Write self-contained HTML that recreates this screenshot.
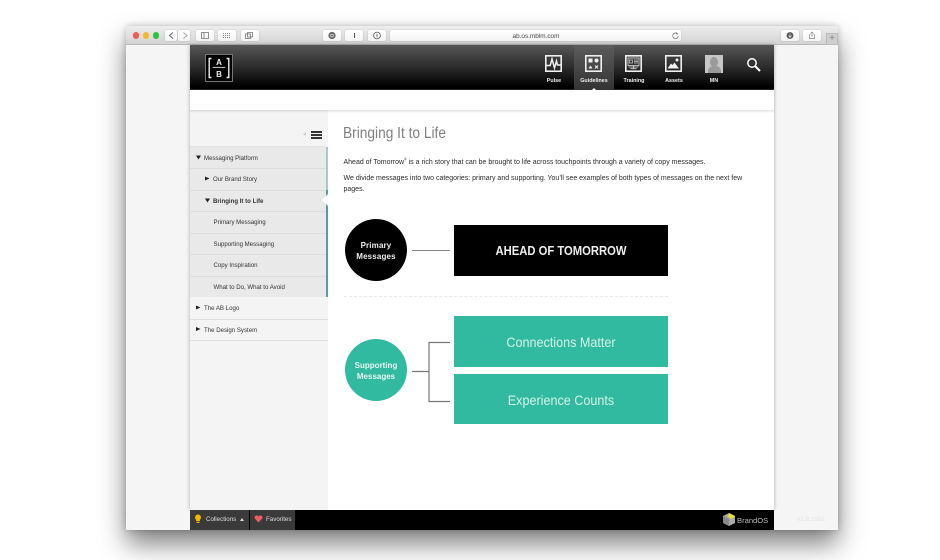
<!DOCTYPE html>
<html><head><meta charset="utf-8">
<style>
html,body{margin:0;padding:0;width:940px;height:560px;overflow:hidden;background:#fff;font-family:"Liberation Sans",sans-serif}
#all{position:absolute;left:0;top:0;width:940px;height:560px;filter:blur(.3px)}
.a{position:absolute}
.t{position:absolute;white-space:nowrap}
#win{left:126px;top:26px;width:712px;height:504px;background:#f5f5f5;box-shadow:0 14px 26px rgba(0,0,0,.5),0 0 7px rgba(0,0,0,.22);border-radius:3px 3px 1px 1px}
#bar{left:126px;top:26px;width:712px;height:19px;background:linear-gradient(#ededed,#d4d3d4);border-radius:3px 3px 0 0;border-bottom:1px solid #b9b9b9;box-sizing:border-box}
.dot{position:absolute;top:32px;width:6.5px;height:6.5px;border-radius:50%}
.btn{position:absolute;top:30px;height:11px;background:linear-gradient(#fff,#f3f3f3);border-radius:2px;box-shadow:0 0 1px rgba(0,0,0,.3)}
#hdr{left:190px;top:45px;width:584px;height:45px;background:linear-gradient(#565656 0,#2c2c2c 50%,#000 95%);border-bottom:1px solid #222;box-sizing:border-box}
.lab{position:absolute;top:77.5px;width:40px;text-align:center;font-size:5.4px;line-height:7px;color:#eee;font-weight:bold}
.ic{position:absolute;top:55px;width:17px;height:17px}
.nav{position:absolute;left:190px;width:136px;height:21px;border-bottom:1px solid #ddd;font-size:6.1px;line-height:21px;color:#333}
.nav span{position:absolute;top:.8px;white-space:nowrap}
.p{position:absolute;left:343.5px;font-size:7px;line-height:10px;color:#2c2c2c;white-space:nowrap}
.box{position:absolute;left:454px;width:214px}
</style></head><body><div id="all">
<div class="a" id="win"></div>
<div class="a" id="bar"></div>
<div class="dot" style="left:132.5px;background:#f4574f"></div>
<div class="dot" style="left:142.5px;background:#f8b62c"></div>
<div class="dot" style="left:152.5px;background:#2cc23e"></div>
<div class="btn" style="left:165px;width:12px"></div>
<div class="btn" style="left:178px;width:12px"></div>
<svg class="a" style="left:165px;top:30px" width="26" height="11" fill="none" stroke-width="1"><path d="M8 2.500L4.500 5.500 8 8.500" stroke="#666"/><path d="M18.500 2.500L22 5.500 18.500 8.500" stroke="#aaa"/></svg>
<div class="btn" style="left:196px;width:18px"></div>
<div class="btn" style="left:218px;width:18px"></div>
<div class="btn" style="left:241px;width:18px"></div>
<div class="btn" style="left:323px;width:18px"></div>
<div class="btn" style="left:345px;width:18px"></div>
<div class="btn" style="left:368px;width:18px"></div>
<div class="btn" style="left:390px;width:291px"></div>
<div class="btn" style="left:781px;width:18px"></div>
<div class="btn" style="left:803px;width:18px"></div>
<svg class="a" style="left:196px;top:30px" width="190" height="11" fill="none" stroke="#777" stroke-width=".8">
<rect x="5.500" y="2.500" width="7" height="6"/><path d="M8 2.500v6"/>
<path d="M27 3.500h7M27 5.500h7M27 7.500h7" stroke-dasharray="1 1" stroke="#666"/>
<rect x="49.500" y="4" width="5" height="4.500"/><rect x="51.500" y="2.500" width="5" height="4.500"/>
<circle cx="136" cy="5.500" r="3.600" fill="#666" stroke="none"/><circle cx="136" cy="5.500" r="1.400" stroke="#ddd"/>
<path d="M158.500 3v5" stroke="#555" stroke-width="1"/>
<circle cx="181" cy="5.500" r="3.400" stroke="#555"/><path d="M181 3.800v3.400" stroke="#555"/>
</svg>
<div class="t" style="left:500px;width:72px;text-align:center;top:31.500px;font-size:6.400px;line-height:9px;color:#444">ab.os.mblm.com</div>
<svg class="a" style="left:671px;top:31px" width="9" height="9" fill="none" stroke="#777" stroke-width=".8"><path d="M6.800 3.200A2.800 2.800 0 1 0 7.300 5"/><path d="M5 .9v2.400h2.200" fill="#777" stroke="none"/></svg>
<svg class="a" style="left:781px;top:30px" width="40" height="11"><circle cx="9" cy="5.500" r="3.400" fill="#555"/><path d="M9 3.500v3M7.500 5.500L9 7.500 10.500 5.500" stroke="#ddd" stroke-width=".8" fill="none"/><path d="M31 2v4.500M29.500 3.500L31 2l1.500 1.500M29.400 4.800h-1v3.700h5.200v-3.700h-1" stroke="#888" stroke-width=".7" fill="none"/></svg>
<div class="a" style="left:826px;top:33px;width:12px;height:12px;background:#cfcfcf;border:1px solid #bbb;box-sizing:border-box;color:#888;font-size:10px;line-height:10px;text-align:center">+</div>

<!-- app backing shadow -->
<div class="a" style="left:190px;top:45px;width:584px;height:465px;box-shadow:0 0 4px rgba(0,0,0,.3)"></div>

<!-- header -->
<div class="a" id="hdr"></div>
<div class="a" style="left:574px;top:45px;width:40px;height:45px;background:linear-gradient(#5c5c5c,#333)"></div>
<div class="a" style="left:205px;top:54px;width:28px;height:27.500px;background:#000;border:1px solid #777;box-sizing:border-box"></div>
<svg class="a" style="left:205px;top:54px" width="28" height="28" fill="none" stroke="#eee" stroke-width="1.400"><path d="M6.500 4.500H4.200V23.500H6.500M21.500 4.500H23.800V23.500H21.500"/><path d="M7.700 13.400H20.300" stroke="#ccc" stroke-width="1"/></svg>
<div class="t" style="left:205px;width:28px;text-align:center;top:57.500px;font-size:8px;line-height:9px;font-weight:bold;color:#eee">A</div>
<div class="t" style="left:205px;width:28px;text-align:center;top:70px;font-size:8px;line-height:9px;font-weight:bold;color:#eee">B</div>

<svg class="ic" style="left:545px" viewBox="0 0 17 17" fill="none"><rect x=".8" y=".8" width="15.400" height="15.400" stroke="#f0f0f0" stroke-width="1.600"/><path d="M1 10.500h4.200L7 4l2.500 9 2-7 1 4h3.500" stroke="#f0f0f0" stroke-width="1.500"/></svg>
<svg class="ic" style="left:585px" viewBox="0 0 17 17" fill="none"><rect x=".8" y=".8" width="15.400" height="15.400" stroke="#f0f0f0" stroke-width="1.600"/><rect x="3.500" y="3.500" width="4" height="4" fill="#f0f0f0"/><circle cx="11.500" cy="5.500" r="2" fill="#f0f0f0"/><path d="M3.500 13.500l2-3 2 3z" fill="#f0f0f0"/><path d="M10 10.500l3 3M13 10.500l-3 3" stroke="#f0f0f0"/></svg>
<svg class="ic" style="left:625px" viewBox="0 0 17 17" fill="none"><rect x=".8" y=".8" width="15.400" height="15.400" stroke="#f0f0f0" stroke-width="1.600"/><rect x="3" y="3" width="11" height="7.500" stroke="#ddd" stroke-width=".8"/><path d="M4.500 5h3v3h-3zM9 5h4M9 6.500h4M9 8h4" stroke="#ccc" stroke-width=".7"/><path d="M3.500 12h10M8.500 10.500v3M5.500 13.700h6" stroke="#ddd" stroke-width=".8"/></svg>
<svg class="ic" style="left:665px" viewBox="0 0 17 17" fill="none"><rect x=".8" y=".8" width="15.400" height="15.400" stroke="#f0f0f0" stroke-width="1.600"/><circle cx="12" cy="5" r="1.500" fill="#f0f0f0"/><path d="M2.500 13.500l3.500-5 1.500 1.500 2-2.500 4.500 6z" fill="#f0f0f0"/></svg>
<div class="ic" style="left:705px;width:18px;height:18px;background:#c6c6c6;overflow:hidden"><div class="a" style="left:5px;top:1.500px;width:8px;height:10px;border-radius:50%;background:#9a9a9a"></div><div class="a" style="left:2.500px;top:10.500px;width:13px;height:10px;border-radius:5px 5px 0 0;background:#9a9a9a"></div></div>
<svg class="a" style="left:746px;top:56.500px" width="15" height="15" fill="none" stroke="#fff"><circle cx="6" cy="6" r="4.200" stroke-width="1.500"/><path d="M9 9l5 5" stroke-width="2"/></svg>

<div class="lab" style="left:534px">Pulse</div>
<div class="lab" style="left:574px">Guidelines</div>
<div class="lab" style="left:614px">Training</div>
<div class="lab" style="left:654px">Assets</div>
<div class="lab" style="left:694px">MN</div>

<!-- white band -->
<div class="a" style="left:190px;top:90px;width:584px;height:20px;background:#fff"></div>
<div class="a" style="left:591px;top:88px;width:0;height:0;border-left:3px solid transparent;border-right:3px solid transparent;border-bottom:3px solid #fff"></div>

<!-- sidebar + content -->
<div class="a" style="left:190px;top:110px;width:138px;height:400px;background:#f4f4f4"></div>
<div class="a" style="left:328px;top:110px;width:446px;height:400px;background:#fff"></div>
<div class="a" style="left:190px;top:109.5px;width:584px;height:3px;background:linear-gradient(rgba(0,0,0,.12),rgba(0,0,0,0))"></div>

<div class="a" style="left:302.5px;top:132px;width:0;height:0;border-top:2.500px solid transparent;border-bottom:2.500px solid transparent;border-right:3.500px solid #ccc"></div>
<div class="a" style="left:311px;top:131px;width:10.5px;height:1.700px;background:#333"></div>
<div class="a" style="left:311px;top:134.2px;width:10.5px;height:1.700px;background:#333"></div>
<div class="a" style="left:311px;top:137.4px;width:10.5px;height:1.700px;background:#333"></div>

<div class="a" style="left:190px;top:146px;width:136px;height:1px;background:#e2e2e2"></div>
<div class="a" style="left:190px;top:147px;width:136px;height:150px;background:#e9e9e9"></div>
<div class="a" style="left:326px;top:147px;width:2px;height:43px;background:#a8c8cd"></div>
<div class="a" style="left:326px;top:190px;width:2px;height:107px;background:#5f97a3"></div>
<div class="a" style="left:322px;top:194px;width:0;height:0;border-top:6.500px solid transparent;border-bottom:6.500px solid transparent;border-right:6px solid #fff"></div>

<div class="nav" style="top:147px"><span style="left:14px">Messaging Platform</span></div>
<div class="nav" style="top:168.5px"><span style="left:23px">Our Brand Story</span></div>
<div class="nav" style="top:190px"><span style="left:23px;font-weight:bold">Bringing It to Life</span></div>
<div class="nav" style="top:211.5px"><span style="left:23.5px">Primary Messaging</span></div>
<div class="nav" style="top:233px"><span style="left:23.5px">Supporting Messaging</span></div>
<div class="nav" style="top:254.5px"><span style="left:23.5px">Copy Inspiration</span></div>
<div class="nav" style="top:276px;border-bottom:0"><span style="left:23.5px">What to Do, What to Avoid</span></div>
<div class="nav" style="top:297.5px;width:138px"><span style="left:14px">The AB Logo</span></div>
<div class="nav" style="top:319px;width:138px"><span style="left:14px">The Design System</span></div>

<svg class="a" style="left:190px;top:147px" width="30" height="190" fill="#222">
<path d="M6 8.500h5l-2.500 4z"/><path d="M15 29.500l4.500 2-4.500 2z"/><path d="M15 51.500h5l-2.500 4z"/>
<path d="M6 158.500l4.500 2-4.500 2z"/><path d="M6 180l4.500 2-4.500 2z"/></svg>

<!-- content -->
<div class="t" style="left:343px;top:124px;font-size:15.5px;line-height:20px;color:#808080;transform:scaleX(.885);transform-origin:0 0">Bringing It to Life</div>
<div class="p" style="top:158px">Ahead of Tomorrow<sup style="font-size:3.500px;line-height:0">®</sup> is a rich story that can be brought to life across touchpoints through a variety of copy messages.</div>
<div class="p" style="top:174px">We divide messages into two categories: primary and supporting. You’ll see examples of both types of messages on the next few</div>
<div class="p" style="top:184.5px">pages.</div>

<div class="a" style="left:345px;top:219px;width:62px;height:62px;border-radius:50%;background:#000"></div>
<div class="t" style="left:345px;width:62px;text-align:center;top:240px;font-size:8px;line-height:11px;color:#eee;font-weight:bold;letter-spacing:.15px">Primary<br>Messages</div>
<div class="a" style="left:412px;top:249.5px;width:38px;height:1.300px;background:#888"></div>
<div class="box" style="top:225px;height:50.5px;background:#000"></div>
<div class="t" style="left:454px;width:214px;text-align:center;top:243.5px;font-size:12.5px;line-height:15px;font-weight:bold;color:#eee;transform:scaleX(.9)">AHEAD OF TOMORROW</div>

<div class="a" style="left:344px;top:296px;width:324px;border-top:1px dashed #e8e8e8"></div>

<div class="a" style="left:345px;top:339px;width:62px;height:62px;border-radius:50%;background:#31ba9f"></div>
<div class="t" style="left:345px;width:62px;text-align:center;top:360px;font-size:8px;line-height:11px;color:#e8f8f4;font-weight:bold">Supporting<br>Messages</div>
<svg class="a" style="left:412px;top:341px" width="40" height="62" fill="none" stroke="#777" stroke-width="1.200"><path d="M0 30.500H17M38 1.500H17V60.500H38"/></svg>
<div class="box" style="top:316px;height:50.5px;background:#31ba9f"></div>
<div class="box" style="top:373.5px;height:50.5px;background:#31ba9f"></div>
<div class="t" style="left:454px;width:214px;text-align:center;top:334px;font-size:14px;line-height:16px;color:#d4f2ea;transform:scaleX(.9)">Connections Matter</div>
<div class="t" style="left:454px;width:214px;text-align:center;top:391.5px;font-size:14px;line-height:16px;color:#d4f2ea;transform:scaleX(.9)">Experience Counts</div>

<!-- footer -->
<div class="a" style="left:190px;top:510px;width:584px;height:20px;background:#000"></div>
<div class="a" style="left:190px;top:510px;width:58.5px;height:20px;background:#3a3a3a"></div>
<div class="a" style="left:249.5px;top:510px;width:45.5px;height:20px;background:#3a3a3a"></div>
<svg class="a" style="left:194px;top:514px" width="8" height="10"><path d="M4 .5a3 3 0 0 1 2 5.200V7H2V5.700A3 3 0 0 1 4 .5zM2.500 7.800h3V9h-3z" fill="#f0b400"/></svg>
<div class="t" style="left:206px;top:515px;font-size:6.200px;line-height:9px;color:#ddd">Collections</div>
<div class="a" style="left:240px;top:518px;width:0;height:0;border-left:2.500px solid transparent;border-right:2.500px solid transparent;border-bottom:3px solid #ddd"></div>
<svg class="a" style="left:254px;top:515px" width="9" height="8"><path d="M4.500 7.500L.8 3.500A2 2 0 0 1 4.500 1.500 2 2 0 0 1 8.200 3.500z" fill="#ec5f64"/></svg>
<div class="t" style="left:266px;top:515px;font-size:6.200px;line-height:9px;color:#ddd">Favorites</div>
<svg class="a" style="left:722px;top:512px" width="14" height="15"><path d="M1 4L7 1l6 3v7l-6 3-6-3z" fill="#aaa"/><path d="M7 1l6 3-3 3-4-2z" fill="#e8e030"/><path d="M7 7v7l-6-3V4z" fill="#888"/></svg>
<div class="t" style="left:737px;top:514.5px;font-size:7.600px;line-height:11px;color:#bbb">BrandOS</div>
<div class="t" style="left:797px;top:515px;font-size:6.500px;line-height:9px;color:#e4e4e4">v1.8.1961</div>
</div></body></html>
